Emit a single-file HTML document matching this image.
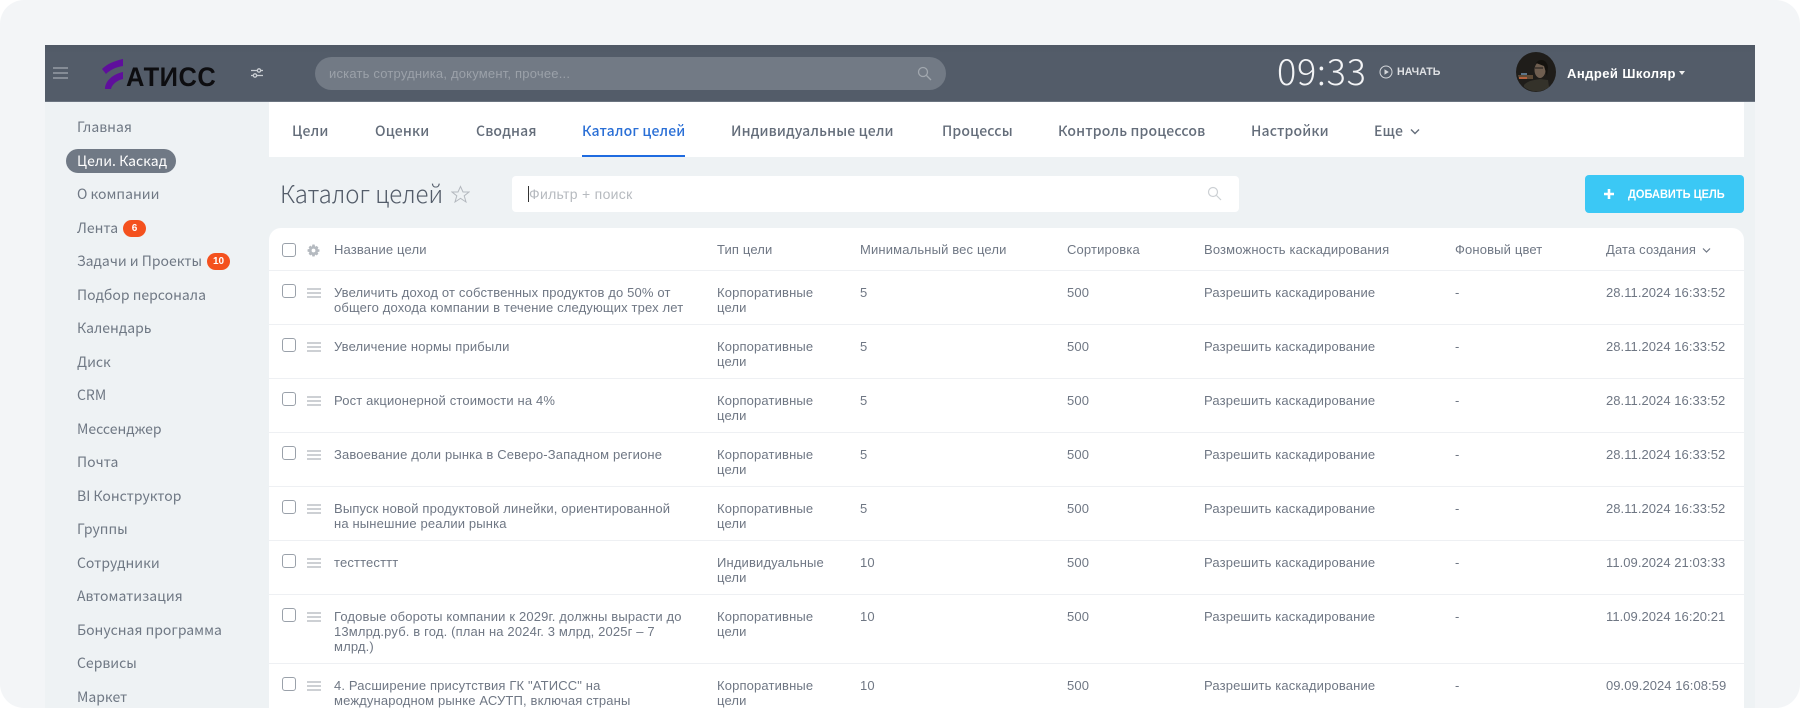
<!DOCTYPE html>
<html><head><meta charset="utf-8">
<style>
*{box-sizing:border-box}
html,body{margin:0;padding:0;width:1800px;height:708px;overflow:hidden;background:#fff}
body{font-family:"Liberation Sans",sans-serif;color:#6a737f;position:relative}
#card{position:absolute;left:0;top:0;width:1800px;height:708px;background:#f3f5f7;border-radius:24px;overflow:hidden}
#hdr{position:absolute;left:45px;top:45px;width:1710px;height:57px;background:linear-gradient(#4f5865,#535c69 8px);border-bottom:1px solid #6b7480}
#side{position:absolute;left:45px;top:101px;width:1710px;height:607px;background:#eef2f4}
.abs{position:absolute;white-space:nowrap}
.nv{position:absolute;left:77px;font:14px/18px "Noto Sans CJK JP","Liberation Sans",sans-serif;color:#6f7884;white-space:nowrap;letter-spacing:0}
.bdg{position:absolute;height:17px;border-radius:9px;background:#f4511e;color:#fff;font:bold 10px/17px "Liberation Sans",sans-serif;text-align:center}
.tab{position:absolute;top:121px;font:500 14px/20px "Noto Sans CJK JP","Liberation Sans",sans-serif;color:#646d7a;white-space:nowrap;letter-spacing:.15px}
#tabs{position:absolute;left:269px;top:102px;width:1475px;height:55px;background:#fff}
#tbl{position:absolute;left:269px;top:228px;width:1475px;height:480px;background:#fff;border-radius:12px 12px 0 0}
.rw{position:absolute;left:0;width:1800px;font-size:13px;line-height:15px;color:#6f7784;letter-spacing:.15px}
.c{position:absolute;white-space:nowrap}
.ln{position:absolute;left:269px;width:1475px;height:1px;background:#eef0f3}
.cb{position:absolute;left:282px;width:14px;height:14px;border:1.5px solid #9aa1aa;border-radius:3px;background:#fff}
.hb{position:absolute;left:307px;width:14px;height:10px;border-top:2px solid #cdd0d4;border-bottom:2px solid #cdd0d4}
.hb:after{content:"";position:absolute;left:0;right:0;top:2px;height:2px;background:#cdd0d4}
</style></head><body>
<div id="card">
<div id="side"></div>
<div id="hdr"></div>

<!-- header -->
<div class="abs" style="left:53px;top:67px;width:15px;height:12px;border-top:2px solid #858c96;border-bottom:2px solid #858c96"><div style="position:absolute;left:0;right:0;top:3px;height:2px;background:#858c96"></div></div>
<svg class="abs" style="left:100px;top:58px" width="30" height="34" viewBox="0 0 30 34"><path d="M2 11C7 6 14 3 23 1V8C16 9 10 12 6 16Z" fill="#5f0f9c"/><path d="M5 31C5 23 13 16 23 14V21C18 22 12 26 11 31Z" fill="#5f0f9c"/></svg>
<div class="abs" style="left:126px;top:61px;font:bold 27px/32px 'Liberation Sans',sans-serif;color:#0d0d10;transform:scaleX(.945);transform-origin:0 0;letter-spacing:.5px">АТИСС</div>
<svg class="abs" style="left:251px;top:67px" width="12" height="12" viewBox="0 0 12 12"><g stroke="#c9cdd2" stroke-width="1.3" fill="#535c69"><path d="M0 3.5H12M0 8.5H12"/><circle cx="8" cy="3.5" r="1.7"/><circle cx="4" cy="8.5" r="1.7"/></g></svg>
<div class="abs" style="left:315px;top:57px;width:631px;height:33px;border-radius:17px;background:#727a85"></div>
<div class="abs" style="left:329px;top:66px;font:13px/15px 'Liberation Sans',sans-serif;color:#9ba1a9;letter-spacing:.2px">искать сотрудника, документ, прочее...</div>
<svg class="abs" style="left:917px;top:66px" width="15" height="15" viewBox="0 0 15 15" fill="none" stroke="#a1a7ae" stroke-width="1.3"><circle cx="6" cy="6" r="4.5"/><path d="M9.5 9.5L14 14"/></svg>
<div class="abs" style="left:1277px;top:45px;font:300 36px/50px 'Noto Sans CJK JP','Liberation Sans',sans-serif;color:#f2f3f5;letter-spacing:.7px">09:33</div>
<svg class="abs" style="left:1379px;top:65px" width="14" height="14" viewBox="0 0 14 14" fill="none" stroke="#d4d7db" stroke-width="1"><circle cx="7" cy="7" r="6"/><path d="M5.5 4.2L9.8 7L5.5 9.8Z" fill="#d4d7db" stroke="none"/></svg>
<div class="abs" style="left:1397px;top:65px;font:bold 11px/14px 'Liberation Sans',sans-serif;color:#dfe1e4;transform:scaleX(.97);transform-origin:0 0">НАЧАТЬ</div>
<svg class="abs" style="left:1516px;top:52px" width="40" height="40" viewBox="0 0 40 40"><circle cx="20" cy="20" r="20" fill="#1f1d1a"/><path d="M8 33C12 28 20 28 24 27L32 28 33 35A20 20 0 0 1 8 35Z" fill="#34322a"/><path d="M2 23H17V27H3Z" fill="#5d4a36"/><path d="M3 25H11V27H3Z" fill="#b5613d"/><path d="M5 21H11V23H5Z" fill="#5a7489"/><ellipse cx="24" cy="18" rx="5.5" ry="8" fill="#6f5e50"/><path d="M20 11C23 6 31 7 32 15L31 24 28 14Z" fill="#14120e"/><path d="M19 16H27" stroke="#2a2622" stroke-width="1.2"/></svg>
<div class="abs" style="left:1567px;top:66px;font:bold 13px/15px 'Liberation Sans',sans-serif;color:#fff;letter-spacing:.45px">Андрей Школяр</div>
<div class="abs" style="left:1679px;top:71px;width:0;height:0;border-left:3.5px solid transparent;border-right:3.5px solid transparent;border-top:4px solid #eee"></div>

<!-- sidebar -->
<div class="nv" style="top:118px">Главная</div>
<div class="abs" style="left:66px;top:149px;width:110px;height:24px;border-radius:12px;background:#707985"></div>
<div class="nv" style="top:152px;color:#fff">Цели. Каскад</div>
<div class="nv" style="top:185px">О компании</div>
<div class="nv" style="top:219px">Лента</div>
<div class="bdg" style="left:123px;top:220px;width:23px">6</div>
<div class="nv" style="top:252px">Задачи и Проекты</div>
<div class="bdg" style="left:207px;top:253px;width:23px">10</div>
<div class="nv" style="top:286px">Подбор персонала</div>
<div class="nv" style="top:319px">Календарь</div>
<div class="nv" style="top:353px">Диск</div>
<div class="nv" style="top:386px">CRM</div>
<div class="nv" style="top:420px">Мессенджер</div>
<div class="nv" style="top:453px">Почта</div>
<div class="nv" style="top:487px">BI Конструктор</div>
<div class="nv" style="top:520px">Группы</div>
<div class="nv" style="top:554px">Сотрудники</div>
<div class="nv" style="top:587px">Автоматизация</div>
<div class="nv" style="top:621px">Бонусная программа</div>
<div class="nv" style="top:654px">Сервисы</div>
<div class="nv" style="top:688px">Маркет</div>

<!-- tabs -->
<div id="tabs"></div>
<div class="tab" style="left:292px">Цели</div>
<div class="tab" style="left:375px">Оценки</div>
<div class="tab" style="left:476px">Сводная</div>
<div class="tab" style="left:582px;color:#2a6fd6">Каталог целей</div>
<div class="abs" style="left:582px;top:155px;width:103px;height:2px;background:#1f6be0"></div>
<div class="tab" style="left:731px">Индивидуальные цели</div>
<div class="tab" style="left:942px">Процессы</div>
<div class="tab" style="left:1058px">Контроль процессов</div>
<div class="tab" style="left:1251px">Настройки</div>
<div class="tab" style="left:1374px">Еще</div>
<svg class="abs" style="left:1410px;top:128px" width="10" height="8" viewBox="0 0 10 8" fill="none" stroke="#646d7a" stroke-width="1.4"><path d="M1 1.5L5 5.5L9 1.5"/></svg>

<!-- title bar -->
<div class="abs" style="left:280px;top:175px;font:300 24px/36px 'Noto Sans CJK JP','Liberation Sans',sans-serif;color:#535c69;letter-spacing:-.1px">Каталог целей</div>
<svg class="abs" style="left:451px;top:185px" width="19" height="19" viewBox="0 0 19 19" fill="none" stroke="#b4b9bf" stroke-width="1"><path d="M9.5 1.5L12 7H18L13.2 10.8L15 17L9.5 13.3L4 17L5.8 10.8L1 7H7Z"/></svg>
<div class="abs" style="left:512px;top:176px;width:727px;height:36px;background:#fff;border-radius:4px"></div>
<div class="abs" style="left:528px;top:186px;width:1px;height:16px;background:#333"></div>
<div class="abs" style="left:529px;top:186px;font:14px/16px 'Liberation Sans',sans-serif;color:#b6babf;letter-spacing:.3px">Фильтр + поиск</div>
<svg class="abs" style="left:1207px;top:186px" width="15" height="15" viewBox="0 0 15 15" fill="none" stroke="#ccd0d4" stroke-width="1.2"><circle cx="6" cy="6" r="4.5"/><path d="M9.5 9.5L14 14"/></svg>
<div class="abs" style="left:1585px;top:175px;width:159px;height:38px;border-radius:4px;background:#3bc8f5"></div>
<svg class="abs" style="left:1603px;top:188px" width="12" height="12" viewBox="0 0 12 12"><path d="M4.700 1H7.300V4.700H11V7.300H7.300V11H4.700V7.300H1V4.700H4.700Z" fill="#fff"/></svg>
<div class="abs" style="left:1628px;top:187px;font:bold 12px/14px 'Liberation Sans',sans-serif;color:#fff;transform:scaleX(.92);transform-origin:0 0">ДОБАВИТЬ ЦЕЛЬ</div>

<!-- table -->
<div id="tbl"></div>
<div class="cb" style="top:243px"></div>
<svg class="abs" style="left:307px;top:244px" width="13" height="13" viewBox="0 0 24 24"><path d="M10 1H14L15 5 18 3.500 21 6.500 19.500 9.500 23 10V14L19.500 15 21 18 18 21 15 19.500 14 23H10L9 19.500 6 21 3 18 4.500 15 1 14V10L4.500 9 3 6 6 3 9 5ZM12 8.500A3.500 3.500 0 1 0 12 15.500 3.500 3.500 0 1 0 12 8.500Z" fill="#b5bac0" fill-rule="evenodd"/></svg>
<div class="rw" style="top:242px">
<span class="c" style="left:334px">Название цели</span><span class="c" style="left:717px">Тип цели</span><span class="c" style="left:860px">Минимальный вес цели</span><span class="c" style="left:1067px">Сортировка</span><span class="c" style="left:1204px">Возможность каскадирования</span><span class="c" style="left:1455px">Фоновый цвет</span><span class="c" style="left:1606px">Дата создания</span>
</div>
<svg class="abs" style="left:1702px;top:247px" width="9" height="7" viewBox="0 0 9 7" fill="none" stroke="#6f7784" stroke-width="1.2"><path d="M1 1.500L4.500 5L8 1.500"/></svg>

<div class="ln" style="top:270px"></div>
<div class="ln" style="top:324px"></div>
<div class="ln" style="top:378px"></div>
<div class="ln" style="top:432px"></div>
<div class="ln" style="top:486px"></div>
<div class="ln" style="top:540px"></div>
<div class="ln" style="top:594px"></div>
<div class="ln" style="top:663px"></div>

<div class="cb" style="top:284px"></div><div class="hb" style="top:288px"></div>
<div class="rw" style="top:285px"><span class="c" style="left:334px">Увеличить доход от собственных продуктов до 50% от<br>общего дохода компании в течение следующих трех лет</span><span class="c" style="left:717px">Корпоративные<br>цели</span><span class="c" style="left:860px">5</span><span class="c" style="left:1067px">500</span><span class="c" style="left:1204px">Разрешить каскадирование</span><span class="c" style="left:1455px">-</span><span class="c" style="left:1606px;letter-spacing:.05px">28.11.2024 16:33:52</span></div>

<div class="cb" style="top:338px"></div><div class="hb" style="top:342px"></div>
<div class="rw" style="top:339px"><span class="c" style="left:334px">Увеличение нормы прибыли</span><span class="c" style="left:717px">Корпоративные<br>цели</span><span class="c" style="left:860px">5</span><span class="c" style="left:1067px">500</span><span class="c" style="left:1204px">Разрешить каскадирование</span><span class="c" style="left:1455px">-</span><span class="c" style="left:1606px;letter-spacing:.05px">28.11.2024 16:33:52</span></div>

<div class="cb" style="top:392px"></div><div class="hb" style="top:396px"></div>
<div class="rw" style="top:393px"><span class="c" style="left:334px">Рост акционерной стоимости на 4%</span><span class="c" style="left:717px">Корпоративные<br>цели</span><span class="c" style="left:860px">5</span><span class="c" style="left:1067px">500</span><span class="c" style="left:1204px">Разрешить каскадирование</span><span class="c" style="left:1455px">-</span><span class="c" style="left:1606px;letter-spacing:.05px">28.11.2024 16:33:52</span></div>

<div class="cb" style="top:446px"></div><div class="hb" style="top:450px"></div>
<div class="rw" style="top:447px"><span class="c" style="left:334px">Завоевание доли рынка в Северо-Западном регионе</span><span class="c" style="left:717px">Корпоративные<br>цели</span><span class="c" style="left:860px">5</span><span class="c" style="left:1067px">500</span><span class="c" style="left:1204px">Разрешить каскадирование</span><span class="c" style="left:1455px">-</span><span class="c" style="left:1606px;letter-spacing:.05px">28.11.2024 16:33:52</span></div>

<div class="cb" style="top:500px"></div><div class="hb" style="top:504px"></div>
<div class="rw" style="top:501px"><span class="c" style="left:334px">Выпуск новой продуктовой линейки, ориентированной<br>на нынешние реалии рынка</span><span class="c" style="left:717px">Корпоративные<br>цели</span><span class="c" style="left:860px">5</span><span class="c" style="left:1067px">500</span><span class="c" style="left:1204px">Разрешить каскадирование</span><span class="c" style="left:1455px">-</span><span class="c" style="left:1606px;letter-spacing:.05px">28.11.2024 16:33:52</span></div>

<div class="cb" style="top:554px"></div><div class="hb" style="top:558px"></div>
<div class="rw" style="top:555px"><span class="c" style="left:334px">тесттесттт</span><span class="c" style="left:717px">Индивидуальные<br>цели</span><span class="c" style="left:860px">10</span><span class="c" style="left:1067px">500</span><span class="c" style="left:1204px">Разрешить каскадирование</span><span class="c" style="left:1455px">-</span><span class="c" style="left:1606px;letter-spacing:.05px">11.09.2024 21:03:33</span></div>

<div class="cb" style="top:608px"></div><div class="hb" style="top:612px"></div>
<div class="rw" style="top:609px"><span class="c" style="left:334px">Годовые обороты компании к 2029г. должны вырасти до<br>13млрд.руб. в год. (план на 2024г. 3 млрд, 2025г – 7<br>млрд.)</span><span class="c" style="left:717px">Корпоративные<br>цели</span><span class="c" style="left:860px">10</span><span class="c" style="left:1067px">500</span><span class="c" style="left:1204px">Разрешить каскадирование</span><span class="c" style="left:1455px">-</span><span class="c" style="left:1606px;letter-spacing:.05px">11.09.2024 16:20:21</span></div>

<div class="cb" style="top:677px"></div><div class="hb" style="top:681px"></div>
<div class="rw" style="top:678px"><span class="c" style="left:334px">4. Расширение присутствия ГК "АТИСС" на<br>международном рынке АСУТП, включая страны</span><span class="c" style="left:717px">Корпоративные<br>цели</span><span class="c" style="left:860px">10</span><span class="c" style="left:1067px">500</span><span class="c" style="left:1204px">Разрешить каскадирование</span><span class="c" style="left:1455px">-</span><span class="c" style="left:1606px;letter-spacing:.05px">09.09.2024 16:08:59</span></div>
</div>
</body></html>
